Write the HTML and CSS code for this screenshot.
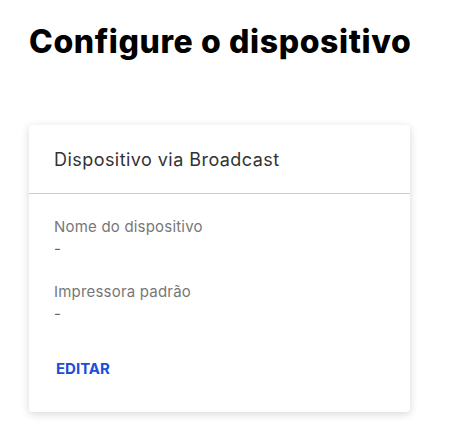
FILE: index.html
```html
<!DOCTYPE html>
<html lang="pt">
<head>
    <meta charset="UTF-8">
    <title>Configure o dispositivo</title>
    <meta name="viewport" content="width=device-width, initial-scale=1.0">
    <link rel="stylesheet" href="styles.css">
</head>
<body>
    <div class="page">
        <h1>Configure o dispositivo</h1>

        <!-- Cartão do dispositivo -->
        <div class="card">
            <div class="card-header">Dispositivo via Broadcast</div>
            <div class="card-body">
                <div class="field">
                    <div class="label">Nome do dispositivo</div>
                    <div class="value">-</div>
                </div>
                <div class="field">
                    <div class="label">Impressora padrão</div>
                    <div class="value">-</div>
                </div>
                <button class="edit-button">EDITAR</button>
            </div>
        </div>
    </div>
</body>
</html>
```

FILE: styles.css
```css
body {
    margin: 0;
    background: #ffffff;
    font-family: 'Inter', sans-serif;
    color: #333333;
}

.page {
    padding: 22px 29px;
    width: 381px;
}

h1 {
    margin: 0 0 63px;
    font-size: 32px;
    line-height: 40px;
    font-weight: 800;
    color: #000000;
    letter-spacing: 0.6px;
    white-space: nowrap;
}

.card {
    background: #ffffff;
    border-radius: 4px;
    box-shadow: 0 2px 8px rgba(0, 0, 0, 0.16);
}

.card-header {
    padding: 23px 25px 21px;
    font-size: 18px;
    line-height: 24px;
    color: #333333;
    letter-spacing: 0.45px;
    border-bottom: 1px solid #cccccc;
}

.card-body {
    padding: 22px 25px 32px;
}

.field {
    margin-bottom: 21px;
}

.label {
    font-size: 15px;
    line-height: 22px;
    color: #777777;
    letter-spacing: 0.2px;
}

.value {
    font-size: 15px;
    line-height: 22px;
    color: #666666;
}

.edit-button {
    background: none;
    border: none;
    padding: 0 0 0 2px;
    margin-top: 12px;
    font-family: 'Inter', sans-serif;
    font-size: 15px;
    line-height: 22px;
    font-weight: 700;
    color: #1d4ed8;
    cursor: pointer;
}
```
